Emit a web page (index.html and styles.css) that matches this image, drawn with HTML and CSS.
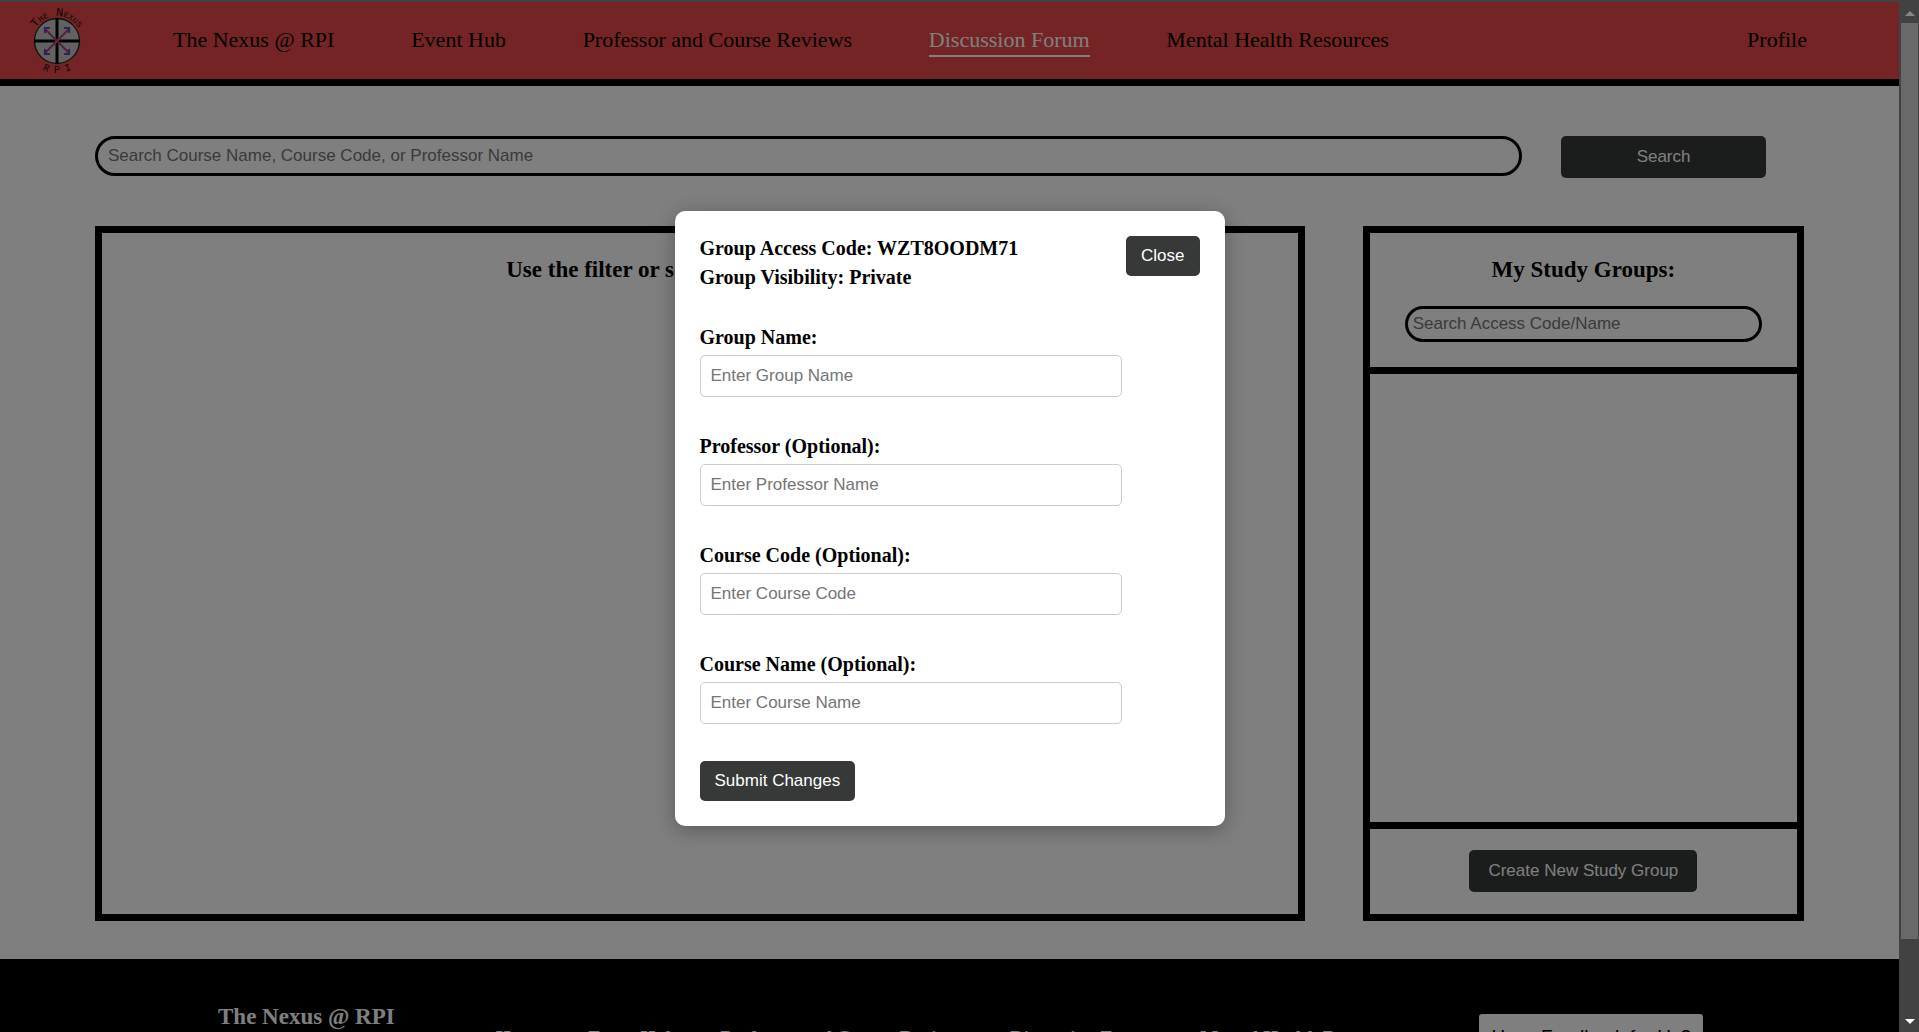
FILE: index.html
```html
<!DOCTYPE html>
<html lang="en">
<head>
<meta charset="utf-8">
<title>The Nexus @ RPI - Discussion Forum</title>
<link rel="stylesheet" href="styles.css">
</head>
<body>
<div class="window">
  <div class="page">
    <header class="navbar">
      <a class="logo" href="#" aria-label="The Nexus RPI">
        <svg viewBox="0 0 60 70" width="60" height="70">
          <defs>
            <path id="arc-top" d="M5 35 A25 25 0 0 1 55 35"/>
            <path id="arc-bottom" d="M-2 35 A32 32 0 0 0 62 35"/>
          </defs>
          <circle cx="30" cy="35" r="22.500" fill="#c4c4c4" stroke="#222" stroke-width="1.300"/>
          <path d="M30 12v46M7 35h46" stroke="#000" stroke-width="3"/>
          <path d="M30 35L18 23M30 35L42 23M30 35L18 47M30 35L42 47" stroke="#a04078" stroke-width="1.800"/>
          <path d="M18 27v-5h5M37 22h5v5M18 43v5h5M37 48h5v-5" fill="none" stroke="#6a3cc0" stroke-width="2.200"/>
          <path d="M28 37l4-4" stroke="#e84848" stroke-width="2"/>
          <text class="logo-text logo-name"><textPath href="#arc-top" startOffset="50%" text-anchor="middle">The Nexus</textPath></text>
          <text class="logo-text"><textPath href="#arc-bottom" startOffset="50%" text-anchor="middle">R P I</textPath></text>
        </svg>
      </a>
      <nav class="nav-links">
        <a href="#">The Nexus @ RPI</a>
        <a href="#">Event Hub</a>
        <a href="#">Professor and Course Reviews</a>
        <a href="#" class="active">Discussion Forum</a>
        <a href="#">Mental Health Resources</a>
      </nav>
      <a class="profile" href="#">Profile</a>
    </header>

    <main class="content">
      <form class="search-row">
        <input class="pill search-input" type="text" aria-label="Search courses" placeholder="Search Course Name, Course Code, or Professor Name">
        <button class="btn search-btn" type="button">Search</button>
      </form>
      <div class="panels">
        <section class="panel">
          <h2 class="panel-title">Use the filter or search to find a course!</h2>
        </section>
        <section class="panel groups">
          <div class="groups-head">
            <h2 class="panel-title">My Study Groups:</h2>
            <input class="pill group-search" type="text" aria-label="Search study groups" placeholder="Search Access Code/Name">
          </div>
          <div class="groups-list"></div>
          <div class="groups-foot">
            <button class="btn create-btn" type="button">Create New Study Group</button>
          </div>
        </section>
      </div>
    </main>

    <footer class="footer">
      <h2 class="footer-title">The Nexus @ RPI</h2>
      <nav class="footer-links">
        <a href="#">Home</a>
        <a href="#">Event Hub</a>
        <a href="#">Professor and Course Reviews</a>
        <a href="#">Discussion Forum</a>
        <a href="#">Mental Health Resources</a>
      </nav>
      <button class="feedback" type="button">Have Feedback for Us?</button>
    </footer>

    <div class="overlay">
      <form class="modal" role="dialog" aria-label="Edit study group">
        <div class="modal-head">
          <div class="modal-info">
            <p>Group Access Code: WZT8OODM71</p>
            <p>Group Visibility: Private</p>
          </div>
          <button class="btn modal-btn" type="button">Close</button>
        </div>
        <div class="fields">
          <div class="field">
            <label for="group-name">Group Name:</label>
            <input id="group-name" type="text" placeholder="Enter Group Name">
          </div>
          <div class="field">
            <label for="professor">Professor (Optional):</label>
            <input id="professor" type="text" placeholder="Enter Professor Name">
          </div>
          <div class="field">
            <label for="course-code">Course Code (Optional):</label>
            <input id="course-code" type="text" placeholder="Enter Course Code">
          </div>
          <div class="field">
            <label for="course-name">Course Name (Optional):</label>
            <input id="course-name" type="text" placeholder="Enter Course Name">
          </div>
          <button class="btn modal-btn" type="button">Submit Changes</button>
        </div>
      </form>
    </div>
  </div>
  <div class="scrollbar" aria-hidden="true">
    <span class="arrow arrow-up"></span>
    <span class="thumb"></span>
    <span class="arrow arrow-down"></span>
  </div>
</div>
</body>
</html>
```
FILE: styles.css
```css
* {
  box-sizing: border-box;
}

body {
  margin: 0;
  font-family: "Liberation Serif", "Times New Roman", serif;
  color: #000;
}

h2,
p {
  margin: 0;
}

a {
  color: inherit;
  text-decoration: none;
}

input,
button {
  font-family: "Liberation Sans", Arial, sans-serif;
  font-size: 17px;
}

input::placeholder {
  color: #757575;
  opacity: 1;
}

.window {
  display: grid;
  grid-template-columns: minmax(0, 1fr) 20px;
  height: 100vh;
  border-top: 2px solid #424242;
  overflow: hidden;
}

.page {
  position: relative;
  overflow: hidden;
  background: #fff;
}

/* Navigation */
.navbar {
  display: flex;
  align-items: center;
  height: 84px;
  padding: 0 92px 0 27px;
  background: #e84848;
  border-bottom: 7px solid #000;
  font-size: 22px;
  line-height: 26px;
  white-space: nowrap;
}

.logo {
  display: flex;
  margin-right: 86px;
}

.logo svg {
  overflow: visible;
}

.logo-text {
  font-family: "Liberation Mono", monospace;
  font-size: 10px;
  fill: #111;
}

.logo-name {
  font-size: 12px;
  font-variant: small-caps;
}

.nav-links {
  display: flex;
  flex: 1;
  gap: 4vw;
}

.nav-links a,
.profile {
  padding: 2px 0;
  border-bottom: 2px solid transparent;
}

.nav-links .active {
  color: #fff;
  border-bottom-color: #fff;
}

/* Forum */
.content {
  padding: 50px 5% 38px;
}

.btn {
  padding: 0 15px;
  border: 0;
  border-radius: 5px;
  background: #363938;
  color: #fff;
}

.pill {
  border: 3px solid #000;
  border-radius: 20px;
  background: #fff;
}

.search-row {
  display: flex;
  align-items: flex-start;
  gap: 39px;
  margin: 0 38px 48px 0;
}

.search-input {
  flex: 1;
  height: 40px;
  padding: 0 10px;
}

.search-btn {
  width: 205px;
  height: 42px;
}

.panels {
  display: grid;
  grid-template-columns: minmax(0, 74fr) minmax(0, 27fr);
  gap: 58px;
}

.panel {
  border: 7px solid #000;
}

.panel-title {
  padding-top: 24px;
  font-size: 23px;
  line-height: 26px;
  text-align: center;
}

.groups {
  display: flex;
  flex-direction: column;
}

.groups-head {
  padding: 0 35px 25px;
  border-bottom: 7px solid #000;
}

.group-search {
  width: 100%;
  height: 36px;
  margin-top: 23px;
  padding: 0 5px;
}

.groups-list {
  flex: 1;
  min-height: 448px;
}

.groups-foot {
  display: flex;
  justify-content: center;
  padding: 21px 0 22px;
  border-top: 7px solid #000;
}

.create-btn {
  height: 42px;
  padding: 0 19px;
}

/* Footer */
.footer {
  display: flex;
  align-items: flex-start;
  padding: 45px 196px 60px 218px;
  background: #000;
  color: #fff;
}

.footer-title {
  font-size: 23px;
  line-height: 26px;
}

.footer-links {
  display: flex;
  flex: 1;
  gap: 44px;
  padding: 22px 0 0 101px;
  font-size: 19px;
  font-weight: bold;
  line-height: 24px;
  white-space: nowrap;
}

.feedback {
  height: 46px;
  margin-top: 10px;
  padding: 0 12px;
  border: 0;
  border-radius: 3px;
  background: #fff;
  color: #000;
  font-size: 19px;
}

/* Modal */
.overlay {
  position: absolute;
  inset: 0;
  display: flex;
  align-items: center;
  justify-content: center;
  padding-top: 2px;
  background: rgba(0, 0, 0, 0.5);
}

.modal {
  width: 550px;
  padding: 25px;
  border-radius: 10px;
  background: #fff;
  box-shadow: 0 4px 20px rgba(0, 0, 0, 0.3);
  font-size: 20px;
  font-weight: bold;
  line-height: 24px;
}

.modal-head {
  display: flex;
  justify-content: space-between;
  align-items: flex-start;
  margin-bottom: 36px;
}

.modal-info {
  display: grid;
  gap: 5px;
}

.modal-btn {
  height: 40px;
}

.fields {
  display: flex;
  flex-direction: column;
  align-items: flex-start;
  gap: 37px;
}

.field {
  display: flex;
  flex-direction: column;
  gap: 6px;
  width: 422px;
}

.field input {
  height: 42px;
  padding: 0 10px;
  border: 1px solid #ccc;
  border-radius: 5px;
}

/* Scrollbar */
.scrollbar {
  display: flex;
  flex-direction: column;
  align-items: center;
  padding: 9px 1px 8px 2px;
  background: #424242;
}

.thumb {
  flex: 1;
  width: 100%;
  margin: 7px 0 80px;
  background: #696969;
}

.arrow {
  border: 5px solid transparent;
}

.arrow-up {
  border-top: 0;
  border-bottom-color: #888;
}

.arrow-down {
  border-bottom: 0;
  border-top-color: #fff;
}
```
